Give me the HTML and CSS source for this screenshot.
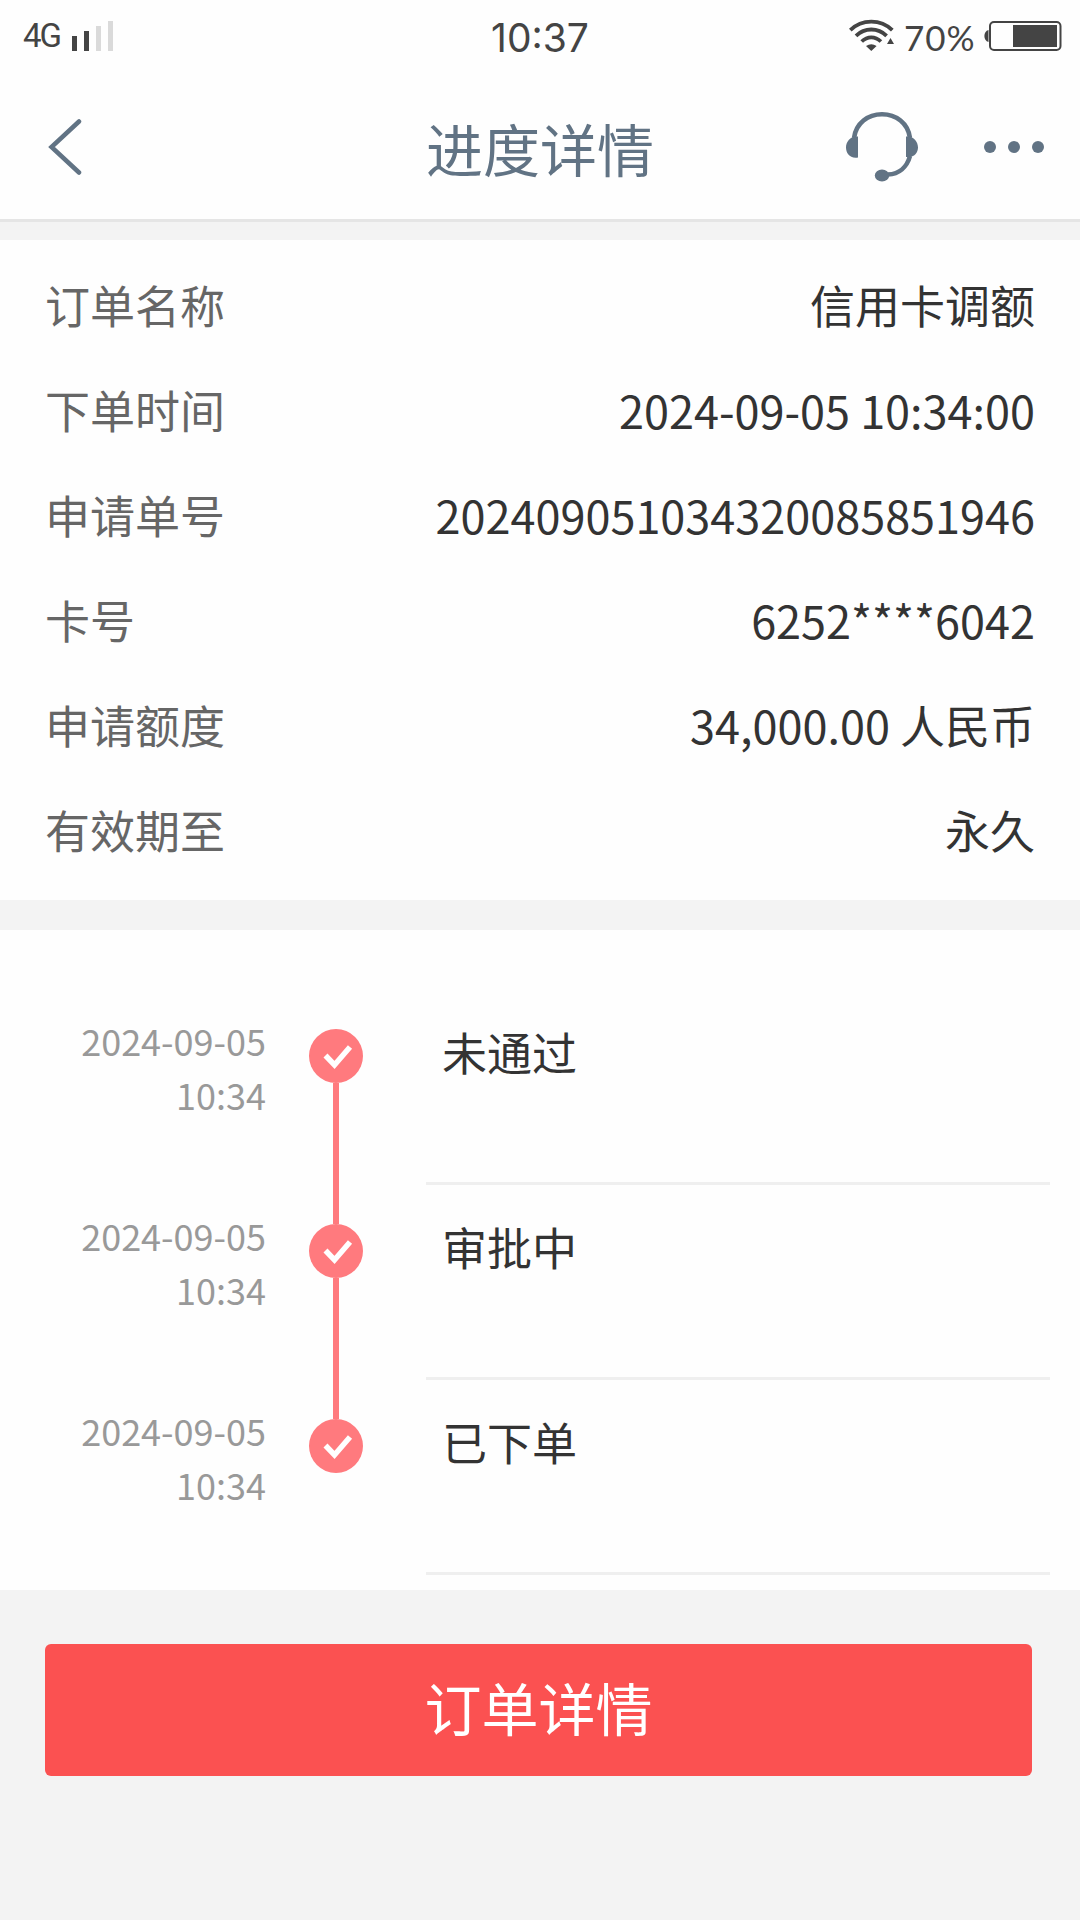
FILE: index.html
```html
<!DOCTYPE html>
<html lang="zh-CN">
<head>
<meta charset="utf-8">
<title>进度详情</title>
<link rel="stylesheet" href="styles.css">
</head>
<body>
<div class="status">
  <div class="status-left">
    <span class="network">4G</span>
    <svg class="signal" width="42" height="30" viewBox="0 0 42 30">
      <path fill="#444" d="M0 15h5v15H0zM12 10h5v20h-5z"/>
      <path fill="#dadada" d="M24 5h5v25h-5zM36 0h5v30h-5z"/>
    </svg>
  </div>
  <span class="clock">10:37</span>
  <div class="status-right">
    <svg class="wifi" width="46" height="32" viewBox="0 0 46 32">
      <g fill="none" stroke="#444" stroke-width="3.8">
        <path d="M1.3 11.2Q10 2.7 22.3 2.7T43.3 11.2"/>
        <path d="M7 16.8Q13.500 10.500 22.300 10.500T37.600 16.800"/>
        <path d="M12.700 22.500Q17 18.300 22.300 18.300T31.900 22.500"/>
      </g>
      <path fill="#444" d="M17 27Q22.300 23.500 27.600 27L22.300 32zM38 25l3.500-6 3.500 6z"/>
    </svg>
    <span class="percent">70%</span>
    <svg class="battery" width="78" height="30" viewBox="0 0 78 30">
      <path fill="#444" d="M4.500 9v12C-1 20-1 10 4.500 9z"/>
      <rect x="6" y="1" width="70.500" height="28" rx="4" fill="none" stroke="#444" stroke-width="2"/>
      <path fill="#444" d="M29 4h44v22H29z"/>
    </svg>
  </div>
</div>
<header class="nav">
  <svg class="back" width="34" height="58" viewBox="0 0 34 58">
    <path d="M31 3.500L3.500 29L31 54.500" fill="none" stroke="#617384" stroke-width="4.500" stroke-linecap="round"/>
  </svg>
  <h1 class="title">进度详情</h1>
  <div class="actions">
    <svg class="service" width="72" height="70" viewBox="0 0 72 70">
      <path d="M8 26C10 11 22 2.300 36 2.300S62 11 64 26" fill="none" stroke="#617384" stroke-width="4.600"/>
      <path d="M64 44C61 55 53 62 42 62.500" fill="none" stroke="#617384" stroke-width="4.600"/>
      <path fill="#617384" d="M12 27V45.500C4 47 0 41 0 35.500S4 24 12 24.500zM60 24.500C68 24 72 30 72 35.500S68 46 60 45z"/>
      <ellipse cx="36" cy="63.500" rx="7.200" ry="6" fill="#617384"/>
    </svg>
    <svg class="more" width="60" height="12" viewBox="0 0 60 12" fill="#617384">
      <circle cx="6" cy="6" r="6"/><circle cx="30" cy="6" r="6"/><circle cx="54" cy="6" r="6"/>
    </svg>
  </div>
</header>
<dl class="details">
  <div class="row"><dt>订单名称</dt><dd>信用卡调额</dd></div>
  <div class="row"><dt>下单时间</dt><dd>2024-09-05 10:34:00</dd></div>
  <div class="row"><dt>申请单号</dt><dd>202409051034320085851946</dd></div>
  <div class="row"><dt>卡号</dt><dd>6252****6042</dd></div>
  <div class="row"><dt>申请额度</dt><dd>34,000.00 人民币</dd></div>
  <div class="row"><dt>有效期至</dt><dd>永久</dd></div>
</dl>
<ol class="timeline">
  <li class="step">
    <time class="when">2024-09-05<br>10:34</time>
    <div class="track"><svg width="54" height="54" viewBox="0 0 54 54"><circle cx="27" cy="27" r="27" fill="#ff7a7e"/><path d="M16.500 26.500L25.500 36L41 18" fill="none" stroke="#fff" stroke-width="5.500"/></svg></div>
    <div class="state">未通过</div>
  </li>
  <li class="step">
    <time class="when">2024-09-05<br>10:34</time>
    <div class="track"><svg width="54" height="54" viewBox="0 0 54 54"><circle cx="27" cy="27" r="27" fill="#ff7a7e"/><path d="M16.500 26.500L25.500 36L41 18" fill="none" stroke="#fff" stroke-width="5.500"/></svg></div>
    <div class="state">审批中</div>
  </li>
  <li class="step">
    <time class="when">2024-09-05<br>10:34</time>
    <div class="track"><svg width="54" height="54" viewBox="0 0 54 54"><circle cx="27" cy="27" r="27" fill="#ff7a7e"/><path d="M16.500 26.500L25.500 36L41 18" fill="none" stroke="#fff" stroke-width="5.500"/></svg></div>
    <div class="state">已下单</div>
  </li>
</ol>
<footer class="footer"><button class="submit">订单详情</button></footer>
</body>
</html>
```
FILE: styles.css
```css
* { box-sizing: border-box; }
body {
  margin: 0;
  width: 1080px;
  min-height: 1920px;
  background: #f3f3f3;
  font-family: "Noto Sans CJK SC", sans-serif;
  color: #333;
}
svg { display: block; flex: none; }
.status {
  display: grid;
  grid-template-columns: 1fr auto 1fr;
  height: 72px;
  padding: 0 18px;
  background: #fefefe;
  color: #444;
  line-height: 72px;
}
.status-left, .status-right { display: flex; align-items: flex-start; }
.status-left { padding-left: 5px; }
.status-right { justify-content: flex-end; }
.network {
  width: 49px;
  font: 33px/71px "Roboto", sans-serif;
  letter-spacing: -2px;
}
.signal { margin-top: 21px; }
.clock { font: 39px/75px "Inter", sans-serif; }
.wifi { margin-top: 19px; }
.percent {
  width: 72px;
  margin: 0 8px 0 9px;
  font: 35px/74px "Lato", sans-serif;
  letter-spacing: 1px;
}
.battery { margin-top: 21px; }
.nav {
  display: grid;
  grid-template-columns: 1fr auto 1fr;
  align-items: center;
  height: 150px;
  padding: 2px 36px 0;
  background: #fefefe;
  border-bottom: 3px solid #e5e5e5;
}
.back { margin-left: 12px; }
.title {
  margin: 0;
  font-size: 57px;
  font-weight: 400;
  line-height: 84px;
  color: #617384;
}
.actions { display: flex; align-items: center; justify-content: flex-end; gap: 66px; }
.details {
  height: 660px;
  margin: 18px 0 30px;
  padding: 12px 45px 0;
  background: #fefefe;
  font-size: 45px;
}
.row { display: flex; justify-content: space-between; height: 105px; line-height: 105px; }
dt { color: #666; }
dd { margin: 0; }
.timeline {
  height: 660px;
  margin: 0;
  padding: 60px 30px 0 0;
  background: #fefefe;
  list-style: none;
}
.step { display: grid; grid-template-columns: 266px 160px 1fr; grid-template-rows: 195px; }
.when {
  padding-top: 23px;
  text-align: right;
  font-size: 36px;
  line-height: 54px;
  color: #999;
}
.track { display: flex; flex-direction: column; align-items: center; padding: 39px 20px 0 0; height: 234px; }
.track::after { content: ""; width: 6px; flex: 1; background: #ff7a7e; }
.step:last-child .track::after { display: none; }
.state {
  padding: 29px 0 0 16px;
  border-bottom: 3px solid #efefef;
  font-size: 45px;
  line-height: 66px;
}
.footer { padding: 54px 48px 0 45px; }
.submit {
  display: block;
  width: 100%;
  height: 132px;
  padding: 0 0 8px;
  border: 0;
  border-radius: 6px;
  background: #fb5151;
  color: #fff;
  font: 57px/124px "Noto Sans CJK SC", sans-serif;
}
```
